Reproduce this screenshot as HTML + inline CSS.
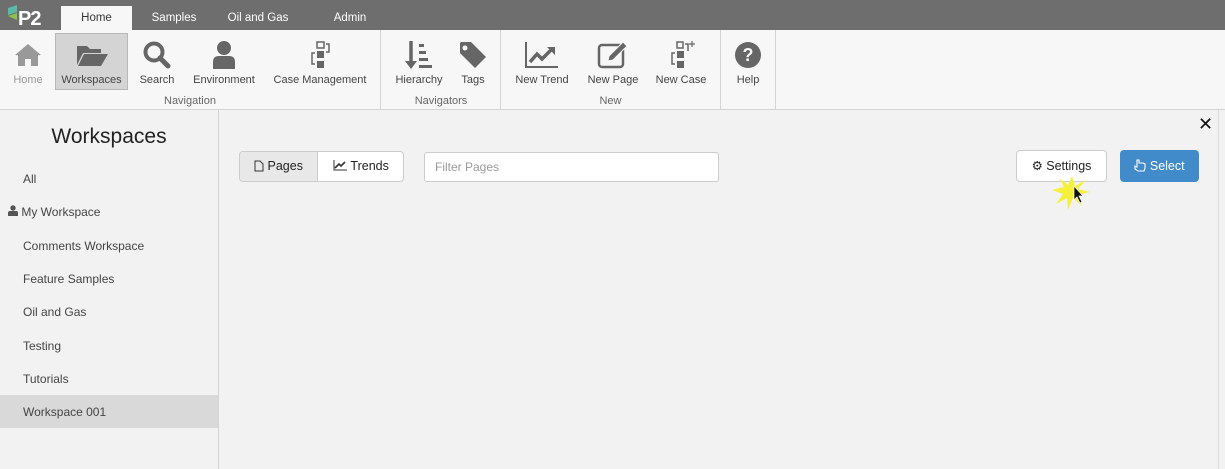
<!DOCTYPE html>
<html><head><style>
*{box-sizing:border-box;margin:0;padding:0}
body{width:1225px;height:469px;overflow:hidden;background:#f2f2f2;font-family:"Liberation Sans",sans-serif;position:relative;font-size:12px;color:#333}
.abs{position:absolute}
.top{left:0;top:0;width:1225px;height:30px;background:#6e6e6e}
.tab{top:6px;height:24px;color:#fff;font-size:11.5px;line-height:24px;text-align:center}
.ribbon{left:0;top:30px;width:1225px;height:80px;background:#f7f7f7;border-bottom:1px solid #d4d4d4}
.btn{top:33px;height:57px;text-align:center;font-size:11px;color:#444}
.btn .ic{height:41px;padding-top:3px;display:flex;align-items:center;justify-content:center}
.grp{top:95px;font-size:11px;color:#666;text-align:center}
.sep{top:30px;width:1px;height:79px;background:#d4d4d4}
.side a{position:absolute;left:23px;font-size:12px;color:#444}
</style></head><body>
<div class="abs top"></div>
<div class="abs" style="left:7px;top:4px;width:44px;height:24px">
<svg width="44" height="24"><polygon points="1,4 10,1 10,8 1,11" fill="#5cb8a8"/><polygon points="1,12 10,9 10,16" fill="#8bc34a"/><text x="11" y="21" font-family="Liberation Sans" font-weight="bold" font-size="20" fill="#fff" letter-spacing="-1">P2</text></svg></div>
<div class="abs tab" style="left:61px;width:71px;background:#f7f7f7;color:#333">Home</div>
<div class="abs tab" style="left:140px;width:68px">Samples</div>
<div class="abs tab" style="left:222px;width:72px">Oil and Gas</div>
<div class="abs tab" style="left:320px;width:60px">Admin</div>
<div class="abs ribbon"></div>
<div class="abs" style="left:55px;top:33px;width:73px;height:57px;background:#d4d4d4;border:1px solid #b8b8b8"></div>
<div class="abs btn" style="left:6px;width:44px;color:#999"><div class="ic"><svg width="30" height="26"><path d="M15 2 L2 13 L5 13 L5 24 L12 24 L12 17 L18 17 L18 24 L25 24 L25 13 L28 13 Z" fill="#999"/></svg></div>Home</div>
<div class="abs btn" style="left:56px;width:71px"><div class="ic"><svg width="34" height="26"><path d="M2 4 H12 L15 7 H26 V11 H8 L2 23 Z M9 12 H33 L26 24 H3 Z" fill="#666"/></svg></div>Workspaces</div>
<div class="abs btn" style="left:136px;width:42px"><div class="ic"><svg width="30" height="30"><circle cx="12" cy="12" r="8.5" fill="none" stroke="#666" stroke-width="4"/><path d="M18 18 L26 26" stroke="#666" stroke-width="5" stroke-linecap="round"/></svg></div>Search</div>
<div class="abs btn" style="left:190px;width:68px"><div class="ic"><svg width="26" height="30"><circle cx="13" cy="8" r="7" fill="#666"/><path d="M2 29 V22 Q2 16 8 16 H18 Q24 16 24 22 V29 Z" fill="#666"/></svg></div>Environment</div>
<div class="abs btn" style="left:271px;width:98px"><div class="ic"><svg width="26" height="30"><rect x="10" y="2" width="7" height="6" fill="none" stroke="#666" stroke-width="1.5"/><rect x="10" y="11" width="7" height="7" fill="#666"/><rect x="10" y="21" width="7" height="7" fill="#666"/><path d="M19 4 H22 V12 H19 M8 13 H5 V24 H8" fill="none" stroke="#666" stroke-width="1.5"/></svg></div>Case Management</div>
<div class="abs grp" style="left:0;width:380px">Navigation</div>
<div class="abs sep" style="left:380px"></div>
<div class="abs btn" style="left:392px;width:54px"><div class="ic"><svg width="30" height="32"><path d="M7 2 V26" stroke="#666" stroke-width="3.5"/><path d="M1 22 L7 30 L13 22 Z" fill="#666"/><rect x="15" y="5" width="5" height="3" fill="#666"/><rect x="15" y="12" width="7" height="3" fill="#666"/><rect x="15" y="19" width="9" height="3" fill="#666"/><rect x="15" y="26" width="13" height="3" fill="#666"/></svg></div>Hierarchy</div>
<div class="abs btn" style="left:455px;width:36px"><div class="ic"><svg width="30" height="30"><path d="M2 3 V13 L17 28 L28 17 L13 2 H3 Z" fill="#666"/><circle cx="7" cy="8" r="2.5" fill="#f7f7f7"/></svg></div>Tags</div>
<div class="abs grp" style="left:381px;width:120px">Navigators</div>
<div class="abs sep" style="left:500px"></div>
<div class="abs btn" style="left:512px;width:60px"><div class="ic"><svg width="36" height="30"><path d="M2 2 V27 H34" fill="none" stroke="#666" stroke-width="2"/><path d="M6 22 L13 14 L18 19 L27 10" fill="none" stroke="#666" stroke-width="3.5"/><path d="M23 7 H31 V15 Z" fill="#666"/></svg></div>New Trend</div>
<div class="abs btn" style="left:584px;width:58px"><div class="ic"><svg width="34" height="30"><rect x="3" y="5" width="24" height="22" rx="3" fill="none" stroke="#666" stroke-width="2.5"/><path d="M12 21 L13 16 L27 2 L31 6 L17 20 Z" fill="#666" stroke="#f7f7f7" stroke-width="1"/></svg></div>New Page</div>
<div class="abs btn" style="left:653px;width:56px"><div class="ic"><svg width="30" height="30"><rect x="11" y="2" width="6" height="6" fill="none" stroke="#666" stroke-width="1.5"/><rect x="11" y="11" width="7" height="7" fill="#666"/><rect x="11" y="21" width="7" height="7" fill="#666"/><path d="M19 4 H22 V11 M9 13 H6 V24 H9" fill="none" stroke="#666" stroke-width="1.5"/><path d="M26 1 V7 M23 4 H29" stroke="#666" stroke-width="1.2"/></svg></div>New Case</div>
<div class="abs grp" style="left:501px;width:219px">New</div>
<div class="abs sep" style="left:720px"></div>
<div class="abs btn" style="left:728px;width:40px"><div class="ic"><svg width="30" height="30"><circle cx="15" cy="15" r="13" fill="#666"/><text x="15" y="21" text-anchor="middle" font-family="Liberation Sans" font-weight="bold" font-size="18" fill="#f7f7f7">?</text></svg></div>Help</div>
<div class="abs sep" style="left:775px"></div>

<div class="abs" style="left:218px;top:110px;width:1px;height:359px;background:#d4d4d4"></div>
<div class="abs" style="left:1218px;top:110px;width:1px;height:359px;background:#ddd"></div>
<div class="abs" style="left:0;top:125px;width:218px;text-align:center;font-size:21px;color:#222">Workspaces</div>
<div class="abs" style="left:0;top:395px;width:218px;height:33px;background:#d9d9d9"></div>
<div class="side">
<a style="top:172px">All</a>
<a style="top:205px;left:8px"><svg width="10" height="11"><circle cx="5" cy="3" r="2.7" fill="#555"/><path d="M0 11 V8 Q0 6 2 6 H8 Q10 6 10 8 V11 Z" fill="#555"/></svg> My Workspace</a>
<a style="top:239px">Comments Workspace</a>
<a style="top:272px">Feature Samples</a>
<a style="top:305px">Oil and Gas</a>
<a style="top:339px">Testing</a>
<a style="top:372px">Tutorials</a>
<a style="top:405px">Workspace 001</a>
</div>

<div class="abs" style="left:239px;top:151px;width:165px;height:31px;border:1px solid #ccc;border-radius:4px;background:#fff;overflow:hidden;font-size:12.5px;color:#222">
<div class="abs" style="left:0;top:0;width:78px;height:29px;background:#e8e8e8;border-right:1px solid #ccc;line-height:29px;text-align:center"><svg width="10" height="12" style="vertical-align:-2px"><path d="M1 1 H6 L9 4 V11 H1 Z" fill="none" stroke="#333"/></svg> Pages</div>
<div class="abs" style="left:78px;top:0;width:86px;height:29px;line-height:29px;text-align:center"><svg width="14" height="11" style="vertical-align:-1px"><path d="M1 0 V10 H14" fill="none" stroke="#333"/><path d="M2 8 L6 4 L8 6 L12 2" fill="none" stroke="#333" stroke-width="1.6"/></svg> Trends</div>
</div>
<div class="abs" style="left:424px;top:152px;width:295px;height:30px;border:1px solid #ccc;border-radius:3px;background:#fff;line-height:29px;padding-left:10px;color:#999;font-size:12px">Filter Pages</div>
<div class="abs" style="left:1016px;top:150px;width:91px;height:32px;border:1px solid #ccc;border-radius:4px;background:#fff;line-height:30px;text-align:center;font-size:12.5px;color:#222">⚙ Settings</div>
<div class="abs" style="left:1120px;top:150px;width:79px;height:32px;border-radius:4px;background:#428bca;line-height:32px;text-align:center;font-size:12.5px;color:#fff"><svg width="12" height="13" style="vertical-align:-2px"><path d="M3 1 V8 L1 7 V10 L4 12 H10 L11 9 V5 L9 4 L7 4 L5 4 V1 Z" fill="none" stroke="#fff" stroke-width="1.1"/></svg> Select</div>
<div class="abs" style="left:1198px;top:114px;font-size:18px;color:#111">✕</div>
<svg class="abs" style="left:1052px;top:176px" width="40" height="36"><polygon points="20,0 23,10 34,4 26,13 38,16 25,19 30,30 21,22 16,34 15,22 4,28 11,18 0,14 12,11 7,2 16,9" fill="#f5f03a"/><path d="M22 10 L22 24 L25 21 L28 27 L30 26 L27 20 L31 20 Z" fill="#111" stroke="#fff" stroke-width="0.7"/></svg>
</body></html>
